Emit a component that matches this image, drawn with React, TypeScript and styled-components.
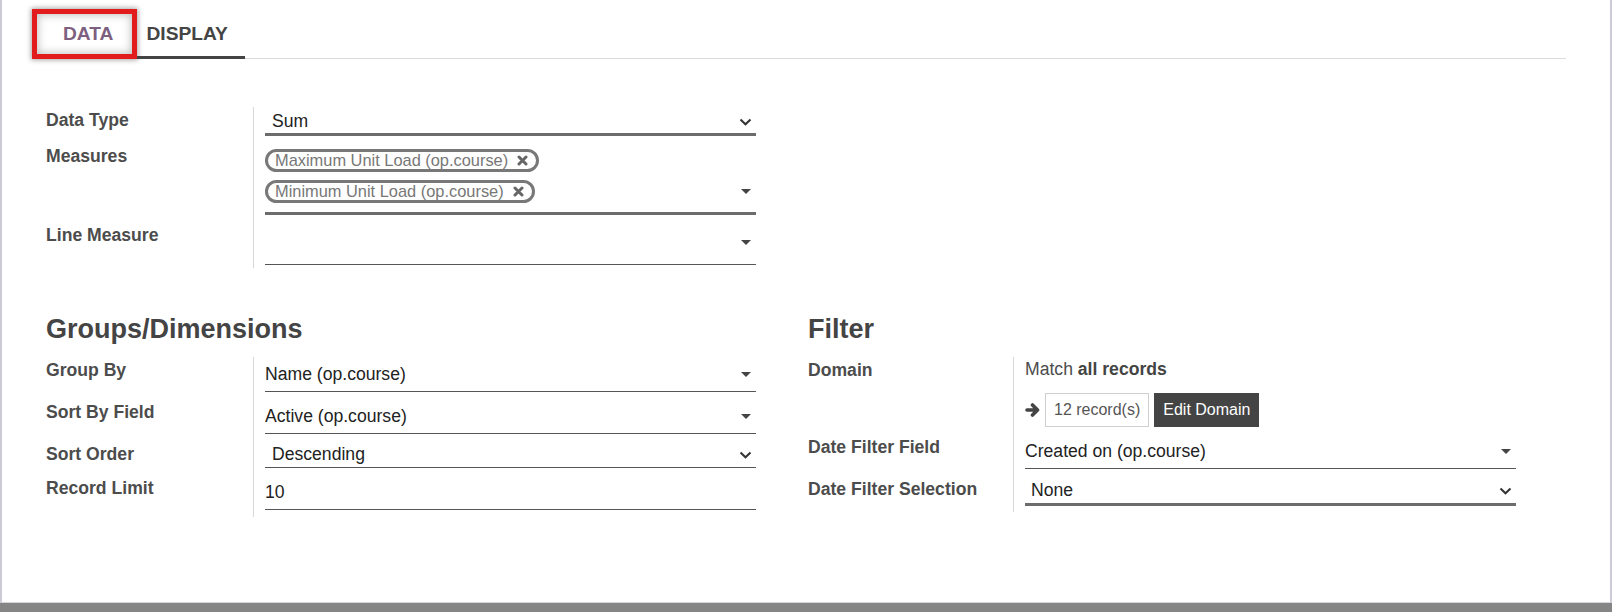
import React from "react";
import styled, { createGlobalStyle } from "styled-components";

const GlobalStyle = createGlobalStyle`
  html, body {
    margin: 0;
    padding: 0;
    background: #858585;
    font-family: "Liberation Sans", Arial, sans-serif;
  }
`;

const Frame = styled.div`
  width: 1612px;
  height: 603px;
  box-sizing: border-box;
  background: #fff;
  border-left: 2px solid #cbcbd6;
  border-right: 2px solid #cbcbd6;
  border-bottom: 1px solid #d4d4dc;
`;

const TabBar = styled.div`
  display: flex;
  margin-left: 30px;
  width: 1534px;
  padding-top: 9px;
  border-bottom: 1px solid #dcdcdc;
`;

const Tab = styled.div<{ $active?: boolean; $marked?: boolean; $pad: string }>`
  height: 50px;
  box-sizing: border-box;
  display: flex;
  align-items: center;
  padding: ${(p) => p.$pad};
  padding-top: 3px;
  margin-bottom: -1px;
  font-size: 19.2px;
  font-weight: bold;
  text-transform: uppercase;
  color: ${(p) => (p.$marked ? "#7d5f80" : "#444")};
  border-bottom: 3px solid ${(p) => (p.$active ? "#444" : "transparent")};
  ${(p) =>
    p.$marked &&
    `box-shadow: inset 0 0 0 5px #e21c1c, inset 0 0 8px 6px rgba(0,0,0,0.25), 0 0 5px 1px rgba(0,0,0,0.35);
     border-bottom: none;
     padding-top: 0;`}
`;

const Content = styled.div`
  padding-left: 44px;
  padding-top: 48px;
`;

const Group = styled.div<{ $width: number; $tail: number }>`
  width: ${(p) => p.$width}px;
  & > div:last-child {
    --tail: ${(p) => p.$tail}px;
  }
`;

const Row = styled.div`
  display: flex;
  --gap: 0px;
  & + & {
    --gap: 7px;
  }
`;

const Label = styled.div<{ $width: number }>`
  width: ${(p) => p.$width}px;
  flex: none;
  padding-top: calc(var(--gap) + 2px);
  line-height: 22px;
  font-size: 17.6px;
  font-weight: bold;
  color: #4c4c4c;
`;

const FieldCell = styled.div`
  flex: 1;
  border-left: 1px solid #d6d6d6;
  padding: var(--gap) 0 var(--tail, 0px) 11px;
  width: 491px;
`;

const Underlined = styled.div<{ $pt: number; $pb: number; $weight: number }>`
  display: flex;
  align-items: center;
  padding: ${(p) => p.$pt}px 0 ${(p) => p.$pb}px;
  line-height: 21px;
  min-height: 21px;
  font-size: 17.6px;
  color: #222;
  border-bottom: ${(p) => p.$weight}px solid
    ${(p) => (p.$weight > 1 ? "#6c6c6c" : "#555")};
`;

const Value = styled.span<{ $indent?: number }>`
  padding-left: ${(p) => p.$indent || 0}px;
`;

const Caret = styled.span`
  margin-left: auto;
  margin-right: 5px;
  width: 0;
  height: 0;
  border-left: 5px solid transparent;
  border-right: 5px solid transparent;
  border-top: 5px solid #444;
`;

const ChevronWrap = styled.svg`
  margin-left: auto;
  margin-right: 4px;
  flex: none;
`;

const Chevron = () => (
  <ChevronWrap width="13" height="8" viewBox="0 0 13 8">
    <polyline
      points="1.5,1.5 6.5,6.3 11.5,1.5"
      fill="none"
      stroke="#333"
      strokeWidth="2"
    />
  </ChevronWrap>
);

const TimesIcon = styled.svg`
  margin-left: 9px;
  flex: none;
`;

const Times = () => (
  <TimesIcon width="11" height="11" viewBox="0 0 11 11">
    <path
      d="M2 2 L9 9 M9 2 L2 9"
      stroke="#666"
      strokeWidth="3"
      strokeLinecap="round"
    />
  </TimesIcon>
);

const ArrowIcon = () => (
  <svg width="15" height="14" viewBox="0 0 15 14">
    <path
      d="M2 7 H12.5 M7.5 2 L12.5 7 L7.5 12"
      fill="none"
      stroke="#444"
      strokeWidth="3.6"
      strokeLinecap="round"
      strokeLinejoin="round"
    />
  </svg>
);

const TagList = styled.div`
  flex: 1;
  display: flex;
  flex-direction: column;
  gap: 8px;
`;

const TagRow = styled.div`
  display: flex;
  align-items: center;
`;

const Tag = styled.span`
  display: inline-flex;
  align-items: center;
  height: 23px;
  box-sizing: border-box;
  border: 3px solid #787878;
  border-radius: 12px;
  padding: 0 8px 0 7px;
  font-size: 16.4px;
  line-height: 17px;
  color: #777;
`;

const Sections = styled.div`
  display: flex;
  gap: 52px;
  margin-top: 45px;
`;

const Heading = styled.h2`
  margin: 0 0 12px;
  font-size: 27px;
  line-height: 32px;
  font-weight: bold;
  color: #444;
`;

const DomainText = styled.div`
  padding-top: 2px;
  line-height: 21px;
  font-size: 17.6px;
  color: #4c4c4c;
  b {
    color: #444;
  }
`;

const DomainActions = styled.div`
  display: flex;
  align-items: center;
  gap: 5px;
  margin-top: 13px;
`;

const RecordCount = styled.span`
  height: 34px;
  box-sizing: border-box;
  border: 1px solid #cfcfcf;
  padding: 0 8px;
  line-height: 32px;
  font-size: 16px;
  color: #555;
`;

const EditButton = styled.button`
  height: 34px;
  border: none;
  border-radius: 0;
  background: #444;
  color: #fff;
  padding: 0 9px;
  font-family: inherit;
  font-size: 16px;
`;

interface IField {
  label: string;
  labelWidth: number;
  children: React.ReactNode;
}

const Field: React.FunctionComponent<IField> = ({ label, labelWidth, children }) => (
  <Row>
    <Label $width={labelWidth}>{label}</Label>
    <FieldCell>{children}</FieldCell>
  </Row>
);

const App = () => {
  return (
    <>
      <GlobalStyle />
      <Frame>
        <TabBar>
          <Tab $marked $pad="0 24px 0 31px">Data</Tab>
          <Tab $active $pad="0 17px 0 9px">Display</Tab>
        </TabBar>
        <Content>
          <Group $width={710} $tail={3}>
            <Field label="Data Type" labelWidth={207}>
              <Underlined $pt={4} $pb={1} $weight={3}>
                <Value $indent={7}>Sum</Value>
                <Chevron />
              </Underlined>
            </Field>
            <Field label="Measures" labelWidth={207}>
              <Underlined $pt={6} $pb={9} $weight={3}>
                <TagList>
                  <TagRow>
                    <Tag>
                      Maximum Unit Load (op.course)
                      <Times />
                    </Tag>
                  </TagRow>
                  <TagRow>
                    <Tag>
                      Minimum Unit Load (op.course)
                      <Times />
                    </Tag>
                    <Caret />
                  </TagRow>
                </TagList>
              </Underlined>
            </Field>
            <Field label="Line Measure" labelWidth={207}>
              <Underlined $pt={10} $pb={11} $weight={1}>
                <Caret />
              </Underlined>
            </Field>
          </Group>

          <Sections>
            <div>
              <Heading>Groups/Dimensions</Heading>
              <Group $width={710} $tail={7}>
                <Field label="Group By" labelWidth={207}>
                  <Underlined $pt={7} $pb={6} $weight={1}>
                    <Value>Name (op.course)</Value>
                    <Caret />
                  </Underlined>
                </Field>
                <Field label="Sort By Field" labelWidth={207}>
                  <Underlined $pt={7} $pb={6} $weight={1}>
                    <Value>Active (op.course)</Value>
                    <Caret />
                  </Underlined>
                </Field>
                <Field label="Sort Order" labelWidth={207}>
                  <Underlined $pt={3} $pb={2} $weight={1}>
                    <Value $indent={7}>Descending</Value>
                    <Chevron />
                  </Underlined>
                </Field>
                <Field label="Record Limit" labelWidth={207}>
                  <Underlined $pt={7} $pb={6} $weight={1}>
                    <Value>10</Value>
                  </Underlined>
                </Field>
              </Group>
            </div>

            <div>
              <Heading>Filter</Heading>
              <Group $width={708} $tail={6}>
                <Field label="Domain" labelWidth={205}>
                  <DomainText>
                    Match <b>all records</b>
                  </DomainText>
                  <DomainActions>
                    <ArrowIcon />
                    <RecordCount>12 record(s)</RecordCount>
                    <EditButton>Edit Domain</EditButton>
                  </DomainActions>
                </Field>
                <Field label="Date Filter Field" labelWidth={205}>
                  <Underlined $pt={7} $pb={6} $weight={1}>
                    <Value>Created on (op.course)</Value>
                    <Caret />
                  </Underlined>
                </Field>
                <Field label="Date Filter Selection" labelWidth={205}>
                  <Underlined $pt={4} $pb={2} $weight={3}>
                    <Value $indent={6}>None</Value>
                    <Chevron />
                  </Underlined>
                </Field>
              </Group>
            </div>
          </Sections>
        </Content>
      </Frame>
    </>
  );
};

export default App;
